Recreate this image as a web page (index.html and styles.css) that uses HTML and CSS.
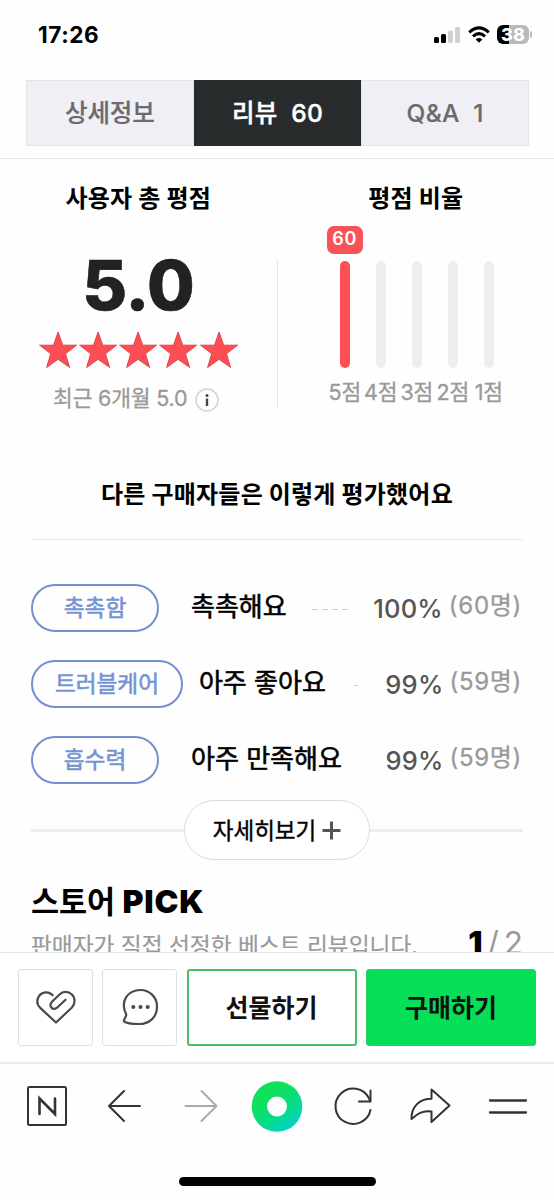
FILE: index.html
```html
<!DOCTYPE html>
<html lang="ko">
<head>
<meta charset="utf-8">
<title>리뷰</title>
<link rel="stylesheet" href="styles.css">
</head>
<body>
<svg class="defs" width="0" height="0"><symbol id="star" viewBox="0 0 40 38"><path d="M20 1 24.600 14.200H38.500L27.400 22.700 31.500 36.500 20 28.300 8.500 36.500 12.600 22.700 1.500 14.200H15.400Z" fill="#fd4e54" stroke="#d8474c" stroke-width="1"/></symbol></svg>
<div class="screen">
  <header class="status">
    <span class="time">17:26</span>
    <div class="status-icons">
      <svg width="27" height="18" viewBox="0 0 27 18"><rect x="0" y="11" width="5" height="6" rx="1.5"/><rect x="7" y="8" width="5" height="9" rx="1.5"/><rect x="14" y="4.500" width="5" height="12.500" rx="1.5" fill="#d0d0d0"/><rect x="21" y="1" width="5" height="16" rx="1.5" fill="#d0d0d0"/></svg>
      <svg width="22" height="18" viewBox="0 0 22 18" fill="none" stroke="#000" stroke-width="3"><path d="M1.200 6.300Q11-2.500 20.800 6.300"/><path d="M5 10.300Q11 4.900 17 10.300"/><path d="M11 16.800 7.700 13.400Q11 10.600 14.300 13.400Z" fill="#000" stroke="none"/></svg>
      <div class="battery"><span>38</span></div>
    </div>
  </header>
  <nav class="tabs">
    <div class="tab">상세정보</div>
    <div class="tab active wide">리뷰&nbsp; 60</div>
    <div class="tab wide">Q&amp;A&nbsp; 1</div>
  </nav>
  <main class="content">
    <section class="rating">
      <div class="half">
        <h2>사용자 총 평점</h2>
        <div class="score">5.0</div>
        <div class="stars"><svg><use href="#star"/></svg><svg><use href="#star"/></svg><svg><use href="#star"/></svg><svg><use href="#star"/></svg><svg><use href="#star"/></svg></div>
        <div class="recent"><span>최근 6개월 5.0</span><svg width="24" height="24" viewBox="0 0 24 24"><circle cx="12" cy="12" r="11" fill="none" stroke="#d2d2d2" stroke-width="1.500"/><circle cx="12" cy="7.500" r="1.500" fill="#444"/><path d="M12 10.500V18" stroke="#444" stroke-width="2.400"/></svg></div>
      </div>
      <div class="divider"></div>
      <div class="half">
        <h2>평점 비율</h2>
        <div class="chart">
          <div class="col"><b class="count">60</b><i class="bar full"></i><span>5점</span></div>
          <div class="col"><i class="bar"></i><span>4점</span></div>
          <div class="col"><i class="bar"></i><span>3점</span></div>
          <div class="col"><i class="bar"></i><span>2점</span></div>
          <div class="col"><i class="bar"></i><span>1점</span></div>
        </div>
      </div>
    </section>
    <h2 class="eval-title">다른 구매자들은 이렇게 평가했어요</h2>
    <section class="evals">
      <div class="row"><div class="tag-cell"><span class="tag">촉촉함</span></div><span class="value">촉촉해요</span><i class="dash"></i><span class="pct">100%</span><span class="people">(60명)</span></div>
      <div class="row"><div class="tag-cell"><span class="tag">트러블케어</span></div><span class="value">아주 좋아요</span><i class="dash short"></i><span class="pct">99%</span><span class="people">(59명)</span></div>
      <div class="row"><div class="tag-cell"><span class="tag">흡수력</span></div><span class="value">아주 만족해요</span><i class="dash none"></i><span class="pct">99%</span><span class="people">(59명)</span></div>
    </section>
    <div class="more">
      <i class="line"></i>
      <div class="more-btn"><span>자세히보기</span><svg width="19" height="19" viewBox="0 0 19 19" stroke="#555" stroke-width="3"><path d="M9.500 .5V18.500M.5 9.500H18.500"/></svg></div>
      <i class="line"></i>
    </div>
    <section class="pick">
      <h1>스토어 <span>PICK</span></h1>
      <div class="pick-sub"><p>판매자가 직접 선정한 베스트 리뷰입니다.</p><div class="page"><b>1</b><span>/</span><span>2</span></div></div>
    </section>
  </main>
  <div class="buy">
    <div class="square"><svg width="44" height="40" viewBox="0 0 44 40" fill="none" stroke="#4a4a4a" stroke-width="2.200" stroke-linecap="round" stroke-linejoin="round"><path d="M18.700 7.300C14.500 2.800 8 3.600 5 8.200C2.300 12.500 3.300 17 6.500 20.100L22 34.500L37.700 19.700C41.500 15.800 41.500 10 37.700 6.300C34 2.900 28.800 3.300 25.500 6.500L18 13.800C14.300 17.600 18.500 23.200 23 19.700L31.500 11.700"/></svg></div>
    <div class="square"><svg width="44" height="40" viewBox="0 0 44 40" fill="none" stroke="#4a4a4a" stroke-width="2.200" stroke-linecap="round" stroke-linejoin="round"><path d="M8.300 26.500C1.500 13 10 2 22.500 2C32 2 39 9.500 39 18.500C39 30 30.500 36 21 36C14.500 36 8 35 6 33.300C5 32.300 8 29.500 8.300 26.500Z"/><g fill="#4a4a4a" stroke="none"><circle cx="15.300" cy="19" r="2"/><circle cx="22.500" cy="19" r="2"/><circle cx="29.700" cy="19" r="2"/></g></svg></div>
    <div class="btn gift">선물하기</div>
    <div class="btn purchase">구매하기</div>
  </div>
  <footer class="toolbar">
    <div class="tools">
      <svg viewBox="0 0 56 52"><rect x="10" y="7" width="38" height="38" rx="1.500"/><path d="M21.500 34V18.500L37 34V18.500" stroke-width="2.600" stroke-linejoin="miter"/></svg>
      <svg viewBox="0 0 56 52"><path d="M29 11 14 26 29 41M14 26H45"/></svg>
      <svg viewBox="0 0 56 52" class="muted"><path d="M29.500 11 44.500 26 29.500 41M44.500 26H13.500"/></svg>
      <svg viewBox="0 0 56 52"><defs><linearGradient id="ring" x1=".2" y1="0" x2=".9" y2="1"><stop offset=".25" stop-color="#10e05c"/><stop offset=".6" stop-color="#05dc86"/><stop offset="1" stop-color="#05cbe4"/></linearGradient></defs><circle cx="28" cy="26.500" r="25.300" fill="url(#ring)" stroke="none"/><circle cx="28" cy="26.500" r="10" fill="#fff" stroke="none"/></svg>
      <svg viewBox="0 0 56 52"><path d="M44.500 30A17.700 17.700 0 1 1 43 18.300L44 21.300"/><path d="M44.500 10.500V21.500H33"/></svg>
      <svg viewBox="0 0 56 52"><path d="M28.500 9.500 46.500 25.500 28.500 42V31.500C19.500 30 14 34 8.500 39C8.300 27 16 18.700 28.500 18.700Z"/></svg>
      <svg viewBox="0 0 56 52"><path d="M10 20.500H46M10 32.500H46" stroke-width="2.300"/></svg>
    </div>
    <div class="home"></div>
  </footer>
</div>
</body>
</html>
```
FILE: styles.css
```css
* { box-sizing: border-box; margin: 0; padding: 0; }
body { width: 554px; height: 1200px; overflow: hidden; background: #fefefe; color: #111; font-family: Inter, "Noto Sans CJK KR", sans-serif; }
.defs { display: block; }
.screen { display: flex; flex-direction: column; height: 1200px; }
.status { flex: none; height: 80px; padding: 20px 25px 0 38px; display: flex; justify-content: space-between; align-items: flex-start; }
.time { font-size: 22.500px; line-height: 29px; font-weight: 700; color: #000; letter-spacing: .6px; }
.status-icons { display: flex; align-items: center; gap: 7px; height: 29px; }
.battery { position: relative; width: 32px; height: 19px; border-radius: 6px; background: linear-gradient(90deg, #000 38%, #b9b9b9 38%); color: #fff; font-size: 18px; line-height: 19px; font-weight: 800; text-align: center; }
.battery::after { content: ""; position: absolute; left: 33px; top: 6px; width: 2px; height: 7px; border-radius: 0 2px 2px 0; background: #bbb; }
.tabs { flex: none; height: 66px; margin: 0 25px 0 26px; display: flex; }
.tab { flex: 1; background: #f0eff5; border: 1px solid #e4e4e7; color: #6b6a6e; font-size: 24.500px; line-height: 65px; text-align: center; font-weight: 500; letter-spacing: -.1px; -webkit-text-stroke: .2px; }
.tab.wide { letter-spacing: .3px; }
.tab.active { background: #282b2c; border-color: #282b2c; color: #fff; -webkit-text-stroke: .4px; }
.content { flex: none; height: 794px; overflow: hidden; margin-top: 12px; border-top: 1px solid #e6e6e6; padding: 0 31px; }
.rating { display: flex; height: 302px; margin: 0 -31px; }
.half { flex: 1; display: flex; flex-direction: column; align-items: center; }
.divider { width: 1px; height: 148px; margin-top: 101px; background: #e5e5e5; }
h2 { font-size: 24px; line-height: 34px; font-weight: 700; color: #000; margin-top: 23px; letter-spacing: .2px; }
.score { font-size: 69px; line-height: 70px; font-weight: 800; color: #222; margin-top: 34px; letter-spacing: -.5px; -webkit-text-stroke: .6px #222; }
.stars { display: flex; margin-top: 11px; }
.stars svg { width: 40.200px; height: 38px; }
.recent { display: flex; align-items: center; gap: 6px; margin: 16px 6px 0 0; font-size: 21.500px; line-height: 26px; color: #999; letter-spacing: -.2px; -webkit-text-stroke: .3px #999; }
.recent svg { position: relative; left: 2px; top: 2px; -webkit-text-stroke: 0; }
.chart { display: flex; align-items: flex-end; margin-top: 9px; height: 182px; margin-left: 2px; }
.col { width: 36px; display: flex; flex-direction: column; align-items: center; color: #999; font-size: 21.500px; line-height: 30px; white-space: nowrap; letter-spacing: -.2px; }
.col span { -webkit-text-stroke: .3px #999; }
.count { width: 36px; height: 28px; border-radius: 7px; background: #f9535a; color: #fff; font-size: 18px; line-height: 26px; font-weight: 600; text-align: center; letter-spacing: .8px; margin-bottom: 7px; }
.bar { width: 10px; height: 107px; border-radius: 5px; background: #eceef0; margin-bottom: 9px; }
.bar.full { background: #fc4f56; }
h2.eval-title { margin: 17px 0 0; text-align: center; letter-spacing: .2px; }
.evals { margin-top: 27px; border-top: 1px solid #e5e5e5; padding: 44px 0 0 0; display: flex; flex-direction: column; gap: 28px; }
.row { display: flex; align-items: center; height: 48px; padding-right: 1px; }
.tag-cell { min-width: 144px; margin-right: 16px; }
.tag { display: inline-block; height: 48px; min-width: 128px; border: 2px solid #748fce; border-radius: 24px; padding: 0 22px; text-align: center; font-size: 22.600px; line-height: 43px; color: #7593d2; font-weight: 400; -webkit-text-stroke: .6px #7593d2; vertical-align: top; }
.value { font-size: 26px; line-height: 46px; height: 48px; color: #000; -webkit-text-stroke: .6px #000; }
.dash { width: 36px; height: 1px; margin: 3px auto 0; background: repeating-linear-gradient(90deg, #ccc 0 6px, transparent 6px 10px); }
.dash.short { width: 4px; }
.dash.none { visibility: hidden; }
.pct { font-size: 25.500px; color: #555; font-weight: 500; letter-spacing: .2px; }
.people { font-size: 24px; color: #999; margin-left: 6px; letter-spacing: .7px; -webkit-text-stroke: .3px #999; line-height: 44px; height: 48px; }
.more { display: flex; align-items: center; margin-top: 16px; height: 60px; }
.line { flex: 1; height: 3px; background: #eee; }
.more-btn { width: 186px; height: 60px; border: 1px solid #dcdcdc; border-radius: 30px; display: flex; align-items: center; justify-content: center; gap: 6px; font-size: 22.500px; color: #000; -webkit-text-stroke: .4px #000; background: #fff; }
.more-btn span { position: relative; top: -1px; }
.more-btn svg { -webkit-text-stroke: 0; }
h1 { font-size: 30.500px; line-height: 40px; font-weight: 700; color: #000; margin-top: 22px; white-space: nowrap; }
h1 span { font-size: 32px; font-weight: 900; letter-spacing: .9px; }
.pick-sub { display: flex; justify-content: space-between; height: 32px; }
.pick-sub p { font-size: 22.700px; line-height: 32px; margin-top: 8px; color: #999; white-space: nowrap; -webkit-text-stroke: .2px #999; }
.page { display: flex; gap: 5px; font-size: 31.500px; line-height: 36px; margin-top: 3px; color: #999; }
.page b { color: #000; font-weight: 900; }
.buy { flex: none; height: 110px; border-top: 1px solid #e3e3e3; padding: 16px 18px 0; display: grid; grid-template-columns: 75px 75px 170px 170px; column-gap: 9.300px; background: #fff; }
.square, .btn { height: 77px; border-radius: 3px; display: flex; align-items: center; justify-content: center; }
.square { border: 1px solid #e0e0e0; }
.btn { font-size: 25px; font-weight: 700; color: #111; padding-bottom: 4px; }
.gift { border: 2px solid #4dbb6a; }
.purchase { background: #05de57; border: 1px solid #2bd05f; }
.toolbar { flex: none; height: 138px; border-top: 2px solid #e9eaed; padding: 16px 8px 0; }
.tools { display: grid; grid-template-columns: repeat(7, 1fr); justify-items: center; }
.tools svg { width: 56px; height: 52px; fill: none; stroke: #333; stroke-width: 2; stroke-linecap: round; stroke-linejoin: round; }
.tools svg.muted { stroke: #aaa; }
.home { width: 197px; height: 9px; border-radius: 5px; background: #000; margin: 45px auto 0; }
```
